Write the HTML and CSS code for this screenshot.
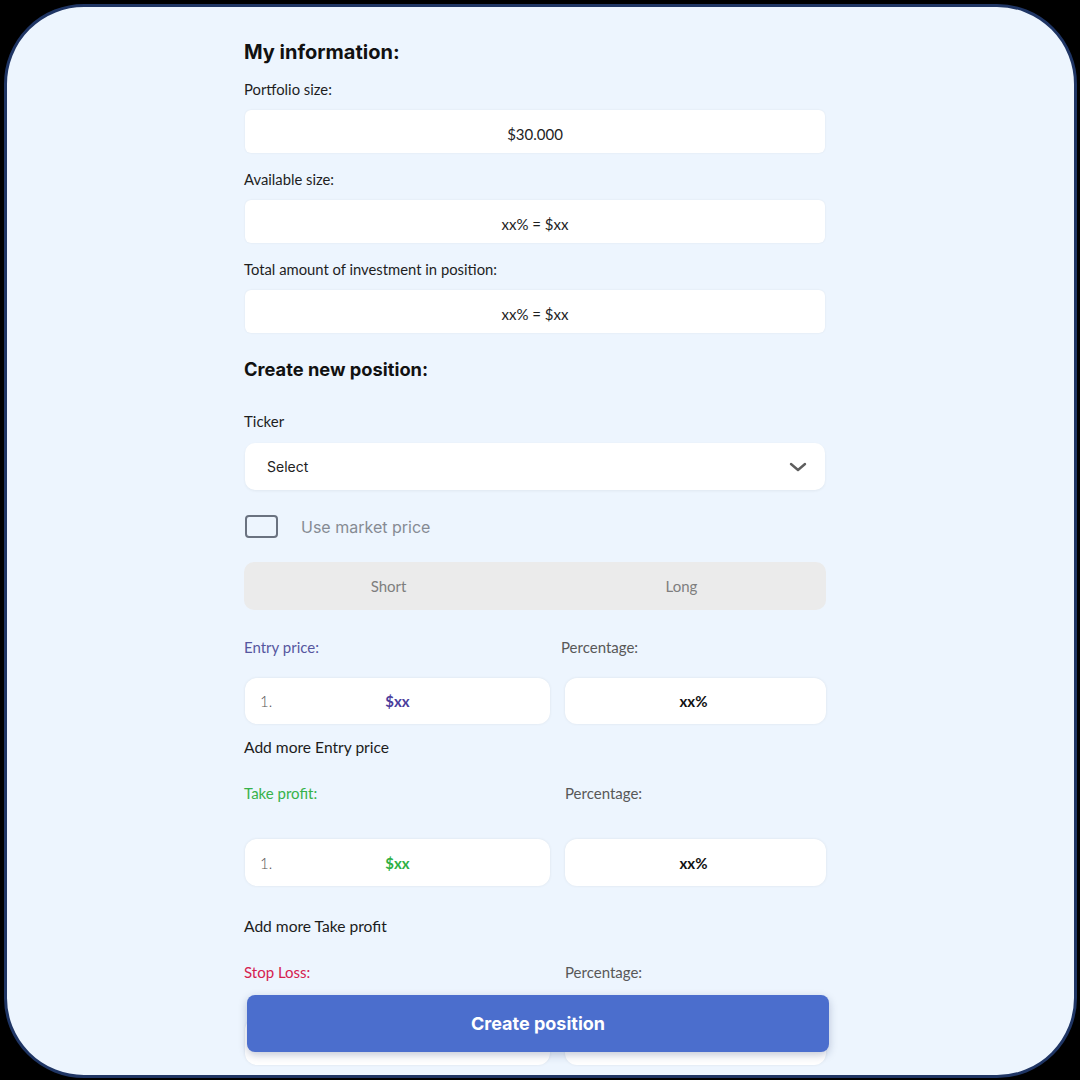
FILE: index.html
```html
<html>

<head>
  <link rel="stylesheet" href="styles.css">
  <title>Create position</title>
</head>

<body>
  <div class="frame">
    <div class="content">
      <h2 class="title">My information:</h2>

      <div class="field">
        <div class="label">Portfolio size:</div>
        <div class="box">$30.000</div>
      </div>
      <div class="field">
        <div class="label">Available size:</div>
        <div class="box">xx% = $xx</div>
      </div>
      <div class="field">
        <div class="label">Total amount of investment in position:</div>
        <div class="box">xx% = $xx</div>
      </div>

      <h2 class="title title-new">Create new position:</h2>

      <div class="label ticker">Ticker</div>
      <div class="select">
        <span>Select</span>
        <svg width="18" height="10" viewBox="0 0 18 10">
          <path d="M2 2 L9 8 L16 2" fill="none" stroke="#5e5e5e" stroke-width="2.4" stroke-linecap="round" stroke-linejoin="round" />
        </svg>
      </div>

      <div class="check-row">
        <div class="check"></div>
        <span>Use market price</span>
      </div>

      <div class="toggle">
        <div class="toggle-opt">Short</div>
        <div class="toggle-opt">Long</div>
      </div>

      <div class="pair entry">
        <div class="label label-color">Entry price:</div>
        <div class="label label-pct">Percentage:</div>
        <div class="cell"><span class="num">1.</span><span class="price">$xx</span></div>
        <div class="cell"><span class="pct">xx%</span></div>
      </div>
      <div class="add add-entry">Add more Entry price</div>

      <div class="pair profit">
        <div class="label label-color">Take profit:</div>
        <div class="label label-pct">Percentage:</div>
        <div class="cell"><span class="num">1.</span><span class="price">$xx</span></div>
        <div class="cell"><span class="pct">xx%</span></div>
      </div>
      <div class="add add-profit">Add more Take profit</div>

      <div class="pair loss">
        <div class="label label-color">Stop Loss:</div>
        <div class="label label-pct">Percentage:</div>
        <div class="cell"><span class="num">1.</span><span class="price">$xx</span></div>
        <div class="cell"><span class="pct">xx%</span></div>
      </div>
    </div>

    <div class="create">Create position</div>
  </div>
</body>

</html>
```

FILE: styles.css
```css
body {
  margin: 0;
  padding: 4px;
  background: #000;
  font-family: Lato, "Liberation Sans", sans-serif;
  color: #1c1c1c;
}

.frame {
  position: relative;
  box-sizing: border-box;
  width: 1073px;
  height: 1074px;
  border: 3px solid #1f3564;
  border-radius: 80px;
  background: #edf5fe;
  overflow: hidden;
}

.content {
  width: 582px;
  margin-left: 237px;
  padding-top: 33px;
}

.title {
  margin: 0;
  font-family: Inter, sans-serif;
  font-weight: 700;
  font-size: 20px;
  line-height: 24px;
  color: #111;
}

.title-new {
  margin-top: 24px;
  font-size: 18.3px;
}

.label {
  font-size: 14.8px;
  line-height: 18px;
  color: #1e1e1e;
}

.field {
  margin-top: 16px;
}

.field + .field {
  margin-top: 17px;
}

.box {
  box-sizing: border-box;
  margin-top: 12px;
  margin-left: 1px;
  width: 580px;
  height: 43px;
  padding-top: 4px;
  background: #fff;
  border-radius: 6px;
  box-shadow: 0 0 2px rgba(0, 0, 0, 0.08);
  display: flex;
  align-items: center;
  justify-content: center;
  font-size: 15px;
  color: #1e1e1e;
}

.ticker {
  margin-top: 31px;
  font-size: 15px;
}

.select {
  margin-top: 13px;
  margin-left: 1px;
  width: 580px;
  box-sizing: border-box;
  height: 47px;
  background: #fff;
  border-radius: 10px;
  box-shadow: 0 1px 3px rgba(0, 0, 0, 0.06);
  display: flex;
  align-items: center;
  justify-content: space-between;
  padding: 0 18px 0 22px;
  font-family: Inter, sans-serif;
  font-size: 14px;
  color: #222;
}

.check-row {
  margin-top: 25px;
  display: flex;
  align-items: center;
  gap: 23px;
  font-family: Inter, sans-serif;
  font-size: 16px;
  color: #868b93;
}

.check {
  box-sizing: border-box;
  width: 33px;
  height: 23px;
  margin-left: 1px;
  border: 2.5px solid #6a7280;
  border-radius: 4px;
}

.toggle {
  margin-top: 24px;
  height: 48px;
  background: #ebebeb;
  border-radius: 10px;
  display: flex;
  width: 582px;
}

.toggle-opt {
  flex: 1;
  display: flex;
  align-items: center;
  justify-content: center;
  font-size: 15px;
  color: #7e7e7e;
}

.toggle-opt:first-child {
  padding-right: 4px;
}

.pair {
  display: grid;
  grid-template-columns: 306px 262px;
  column-gap: 14px;
  margin-top: 28px;
}

.label-color,
.label-pct {
  font-size: 15px;
}

.label-pct {
  color: #585858;
  padding-left: 1px;
}

.entry .label-pct {
  padding-left: 0;
  margin-left: -3px;
}

.entry .label-color {
  color: #5657a0;
}

.profit .label-color {
  color: #36b24a;
}

.loss .label-color {
  color: #d5214f;
}

.cell {
  position: relative;
  margin-top: 22px;
  margin-left: 1px;
  height: 46px;
  background: #fff;
  border-radius: 12px;
  box-shadow: 0 0 3px rgba(0, 0, 0, 0.08);
  display: flex;
  align-items: center;
  justify-content: center;
  font-size: 15px;
}

.profit .cell,
.loss .cell {
  margin-top: 37px;
  height: 47px;
}

.num {
  position: absolute;
  left: 15px;
  font-weight: 300;
  color: #555;
}

.price {
  font-weight: 700;
}

.entry .price {
  color: #4b3d9c;
}

.profit .price {
  color: #2eb045;
}

.loss .price {
  color: #d5214f;
}

.pct {
  font-weight: 700;
  color: #111;
  margin-left: -4px;
}

.add {
  font-size: 15.6px;
  line-height: 20px;
  color: #1c1c1c;
}

.add-entry {
  margin-top: 13px;
}

.add-profit {
  margin-top: 30px;
}

.profit {
  margin-top: 27px;
}

.loss {
  margin-top: 27px;
}

.create {
  position: absolute;
  left: 240px;
  bottom: 23px;
  width: 582px;
  height: 57px;
  background: #4b6ecd;
  border-radius: 8px;
  box-shadow: 0 3px 8px rgba(20, 40, 90, 0.25);
  display: flex;
  align-items: center;
  justify-content: center;
  font-family: Inter, sans-serif;
  font-weight: 700;
  font-size: 18px;
  color: #fff;
}
```
